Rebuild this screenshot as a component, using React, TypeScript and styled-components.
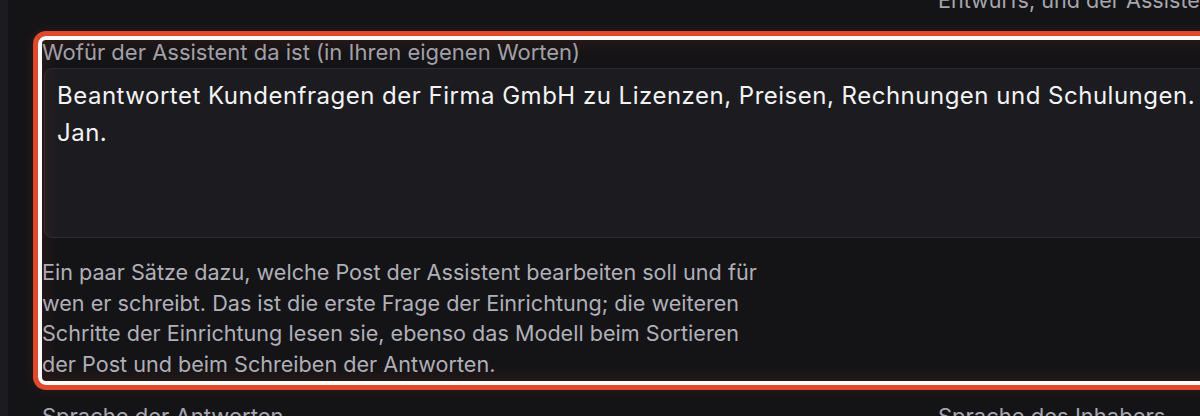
import styled, { createGlobalStyle } from "styled-components";

const GlobalStyle = createGlobalStyle`
  html, body {
    margin: 0;
    padding: 0;
    background: #141417;
    overflow: hidden;
  }
  body {
    font-family: Inter, "Noto Sans", "Liberation Sans", sans-serif;
    color: #e8e8ec;
  }
`;

const Shell = styled.div`
  display: flex;
  height: 416px;
  overflow: hidden;
`;

const SideEdge = styled.div`
  flex: 0 0 8px;
  background: #1c1c20;
`;

const Main = styled.main`
  flex: 1;
  min-width: 0;
  padding-left: 34px;
  overflow: hidden;
`;

// the view is scrolled down a little, so the top row is cut off
const Form = styled.div`
  display: grid;
  grid-template-columns: 864px 864px;
  column-gap: 32px;
  row-gap: 24px;
  margin-top: -15.5px;
`;

const Cell = styled.div<{ $full?: boolean }>`
  grid-column: ${(p) => (p.$full ? "1 / -1" : "auto")};
  display: flex;
  flex-direction: column;
  min-width: 0;
`;

const Field = styled(Cell)`
  position: relative;
`;

// focus ring drawn over the field by the setup tour
const Highlight = styled.div`
  position: absolute;
  top: -3.5px;
  left: -4px;
  right: -4px;
  bottom: -5.5px;
  border: 4px solid #fffaf7;
  border-radius: 8px;
  box-shadow: 0 0 0 5px #e1492d, 0 0 12px 5px rgba(225, 73, 45, 0.14),
    inset 0 0 20px rgba(225, 73, 45, 0.17);
  pointer-events: none;
`;

const Label = styled.label`
  font-size: 22px;
  line-height: 26px;
  color: #a2a2a9;
`;

const TextArea = styled.div`
  margin-top: 3px;
  margin-left: 2px;
  height: 170px;
  box-sizing: border-box;
  padding: 7.5px 12px;
  background: #1c1c20;
  border: 1px solid #2b2b30;
  border-radius: 8px;
  font-size: 24px;
  letter-spacing: 0.5px;
  line-height: 37.5px;
  color: #f3f3f5;
  white-space: pre-wrap;
`;

const Help = styled.p<{ $width?: number }>`
  margin: 19px 0 0;
  max-width: ${(p) => (p.$width ? `${p.$width}px` : "none")};
  font-size: 21.6px;
  line-height: 30.5px;
  color: #b0b0b7;
`;

const TopHelp = styled(Help)`
  margin: 0;
  color: #a6a6ad;
  white-space: nowrap;
`;

const SectionLabel = styled(Label)`
  color: #a6a6ad;
`;

export default function App() {
  return (
    <>
      <GlobalStyle />
      <Shell>
        <SideEdge />
        <Main>
          <Form>
            <Cell />
            <Cell>
              <TopHelp>Entwurfs, und der Assistent übernimmt ihn.</TopHelp>
            </Cell>

            <Field $full>
              <Label>Wofür der Assistent da ist (in Ihren eigenen Worten)</Label>
              <TextArea>
                {"Beantwortet Kundenfragen der Firma GmbH zu Lizenzen, Preisen, Rechnungen und Schulungen.\nJan."}
              </TextArea>
              <Help $width={728}>
                Ein paar Sätze dazu, welche Post der Assistent bearbeiten soll und für
                wen er schreibt. Das ist die erste Frage der Einrichtung; die weiteren
                Schritte der Einrichtung lesen sie, ebenso das Modell beim Sortieren
                der Post und beim Schreiben der Antworten.
              </Help>
              <Highlight />
            </Field>

            <Cell>
              <SectionLabel>Sprache der Antworten</SectionLabel>
            </Cell>
            <Cell>
              <SectionLabel>Sprache des Inhabers</SectionLabel>
            </Cell>
          </Form>
        </Main>
      </Shell>
    </>
  );
}
